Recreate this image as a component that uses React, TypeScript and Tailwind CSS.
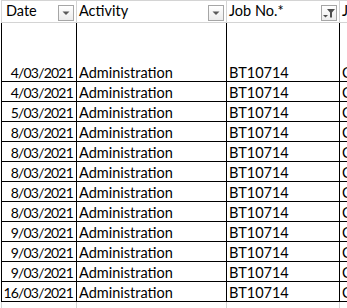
import React from "react";

const dates = [
  "4/03/2021",
  "4/03/2021",
  "5/03/2021",
  "8/03/2021",
  "8/03/2021",
  "8/03/2021",
  "8/03/2021",
  "8/03/2021",
  "9/03/2021",
  "9/03/2021",
  "9/03/2021",
  "16/03/2021",
];

function DropBtn({ filter }: { filter?: boolean }) {
  return (
    <div className="absolute right-[2px] top-[4px] w-[16px] h-[16px] border border-[#a6a6a6] bg-gradient-to-b from-[#ffffff] to-[#ececec] flex items-center justify-center">
      {filter ? (
        <svg width="14" height="14" viewBox="0 0 14 14">
          <polygon points="1,9 6,9 3.5,11.5" fill="#4d4d4d" />
          <polygon points="5,3 13,3 10,6.5 10,11.5 8,11.5 8,6.5" fill="#4d4d4d" />
        </svg>
      ) : (
        <svg width="14" height="14" viewBox="0 0 14 14">
          <polygon points="3.5,5.5 10.5,5.5 7,9" fill="#595959" />
        </svg>
      )}
    </div>
  );
}

export default function App() {
  const font = "font-['Lato','Liberation_Sans',sans-serif]";
  return (
    <div className={`w-[347px] h-[308px] overflow-hidden bg-white text-black ${font} text-[14.5px] leading-none`}>
      <div className="flex w-[600px]">
        <div className="w-[1px] shrink-0" />
        <div className="flex flex-col">
          {/* header */}
          <div className="flex h-[23px] border-t border-b border-[#d4d4d4]">
            <div className="relative w-[75px] border-l border-[#d4d4d4] pl-[4px] flex items-center">Date<DropBtn /></div>
            <div className="relative w-[150px] border-l border-[#d4d4d4] pl-[2px] flex items-center">Activity<DropBtn /></div>
            <div className="relative w-[113px] border-l border-[#d4d4d4] pl-[2px] flex items-center">Job No.*<DropBtn filter /></div>
            <div className="relative w-[100px] border-l border-[#d4d4d4] pl-[2px] flex items-center">J</div>
          </div>
          {dates.map((d, i) => (
            <div key={i} className={`flex ${i === 0 ? "h-[59px]" : "h-[20px]"} border-b border-black`}>
              <div className="w-[75px] border-l border-black pr-[3px] flex items-end justify-end pb-[1px] text-[14px] tracking-[-0.8px]">{d}</div>
              <div className="w-[150px] border-l border-black pl-[2px] flex items-end pb-[1px]">Administration</div>
              <div className="w-[113px] border-l border-black pl-[2px] flex items-end pb-[1px]">BT10714</div>
              <div className="w-[100px] border-l border-black pl-[2px] flex items-end pb-[1px]">C</div>
            </div>
          ))}
          <div className="flex h-[20px]">
            <div className="w-[75px] border-l border-[#d4d4d4]" />
            <div className="w-[150px] border-l border-[#d4d4d4]" />
            <div className="w-[113px] border-l border-[#d4d4d4]" />
            <div className="w-[100px] border-l border-[#d4d4d4]" />
          </div>
        </div>
      </div>
    </div>
  );
}
